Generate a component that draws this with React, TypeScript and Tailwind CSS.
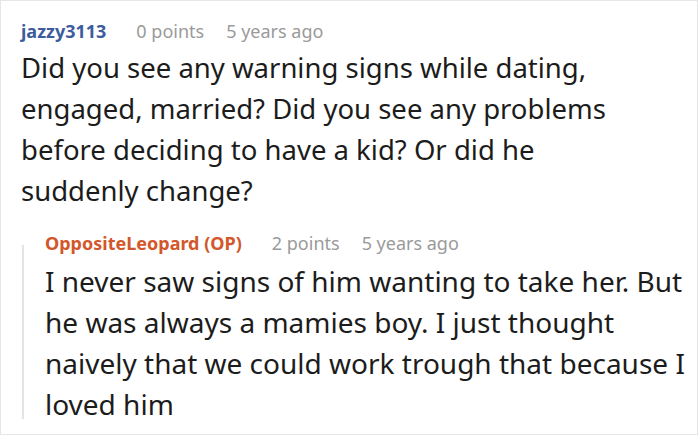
const meta = "text-[18px] leading-[20px] text-[#9a9a9a]"

export default function App() {
  return (
    <div className="w-[698px] h-[435px] border border-[#e6e6e6] bg-white font-['Noto_Sans',sans-serif] overflow-hidden">
      <div className="pl-[20px] pt-[20px]">
        <div className="flex items-center gap-[30px] h-[20px]">
          <span className="text-[18px] leading-[20px] font-bold text-[#3d5c9d]">jazzy3113</span>
          <div className="flex gap-[22px]">
            <span className={meta}>0 points</span>
            <span className={meta}>5 years ago</span>
          </div>
        </div>
        <p className="mt-[6px] max-w-[620px] text-[27.5px] leading-[41px] text-[#1c1c1c]">
          Did you see any warning signs while dating, engaged, married? Did you see any problems before deciding to have a kid? Or did he suddenly change?
        </p>
        <div className="flex mt-[22px]">
          <div className="w-[2px] bg-[#e4e4e4] ml-[1px] mt-[12px] mb-[6px] shrink-0" />
          <div className="pl-[21px]">
            <div className="flex items-center gap-[30px] h-[20px]">
              <span className="text-[18px] leading-[20px] font-bold text-[#d2572b]">OppositeLeopard (OP)</span>
              <div className="flex gap-[22px]">
                <span className={meta}>2 points</span>
                <span className={meta}>5 years ago</span>
              </div>
            </div>
            <p className="mt-[8px] text-[28px] leading-[41px] text-[#1c1c1c]">
              I never saw signs of him wanting to take her. But he was always a mamies boy. I just thought naively that we could work trough that because I loved him
            </p>
          </div>
        </div>
      </div>
    </div>
  )
}
